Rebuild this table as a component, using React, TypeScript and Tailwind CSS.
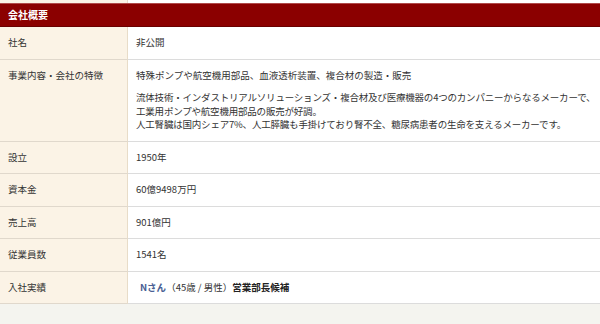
import React from 'react';

type Row = { label: string; value: React.ReactNode };

const rows: Row[] = [
  { label: '社名', value: '非公開' },
  {
    label: '事業内容・会社の特徴',
    value: (
      <>
        <p>特殊ポンプや航空機用部品、血液透析装置、複合材の製造・販売</p>
        <p className="mt-[9px] whitespace-nowrap tracking-[-0.2px]">
          流体技術・インダストリアルソリューションズ・複合材及び医療機器の4つのカンパニーからなるメーカーで、
          <br />
          工業用ポンプや航空機用部品の販売が好調。
          <br />
          人工腎臓は国内シェア7%、人工膵臓も手掛けており腎不全、糖尿病患者の生命を支えるメーカーです。
        </p>
      </>
    ),
  },
  { label: '設立', value: '1950年' },
  { label: '資本金', value: '60億9498万円' },
  { label: '売上高', value: '901億円' },
  { label: '従業員数', value: '1541名' },
  {
    label: '入社実績',
    value: (
      <span className="pl-1">
        <span className="font-bold text-[#4a5f94]">Nさん</span>
        <span>（45歳 / 男性）</span>
        <span className="font-bold text-[#222]">営業部長候補</span>
      </span>
    ),
  },
];

export default function App() {
  return (
    <div
      className="w-[600px] h-[324px] overflow-hidden bg-[#f4f4ef] text-[9.5px] text-[#333]"
      style={{ fontFamily: '"Noto Sans CJK JP", "Noto Sans", sans-serif' }}
    >
      {/* tail of the previous table */}
      <div className="grid grid-cols-[128px_1fr] h-[3px]">
        <div className="bg-[#fbf3e6] border-r border-[#e8dcc8]" />
        <div className="bg-white" />
      </div>

      <div className="h-[24px] bg-[#8b0000] border-t border-[#b04a4a] border-b border-b-[#6a0000] flex items-center px-2">
        <h2 className="text-white font-bold text-[10px] leading-none">会社概要</h2>
      </div>

      <div className="grid grid-cols-[128px_1fr] leading-[13.5px]">
        {rows.map((r) => (
          <React.Fragment key={r.label}>
            <div className="bg-[#fbf3e6] border-r border-[#e8dcc8] border-b border-b-[#e0d8cc] px-2 py-[9px]">
              {r.label}
            </div>
            <div className="bg-white border-b border-[#dcdcdc] px-2 py-[9px] overflow-hidden">{r.value}</div>
          </React.Fragment>
        ))}
      </div>
    </div>
  );
}
